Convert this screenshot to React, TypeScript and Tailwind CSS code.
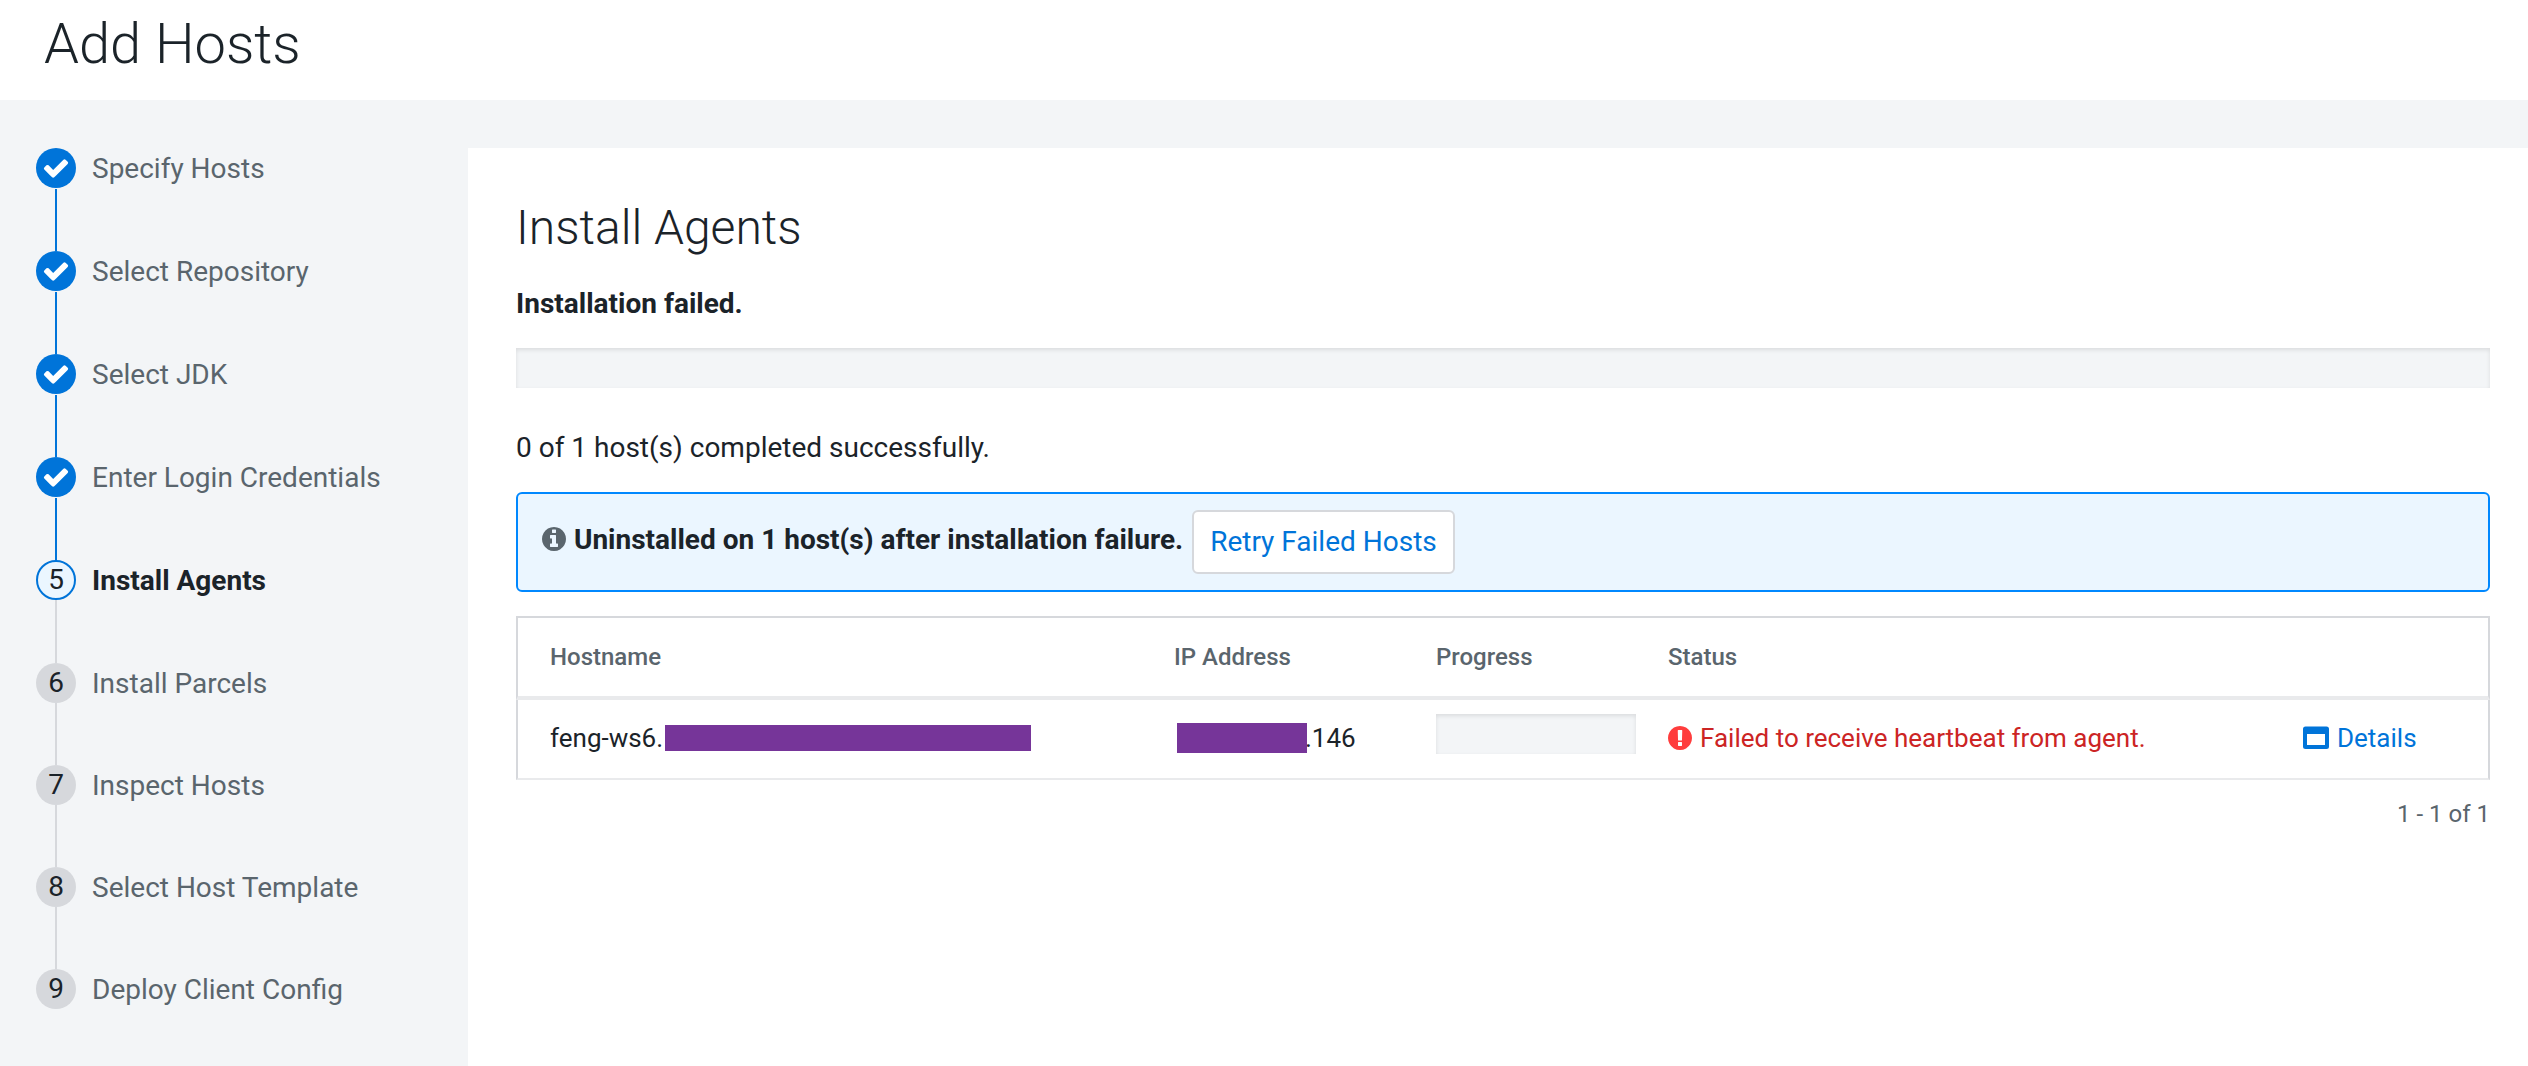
import React from "react";

type StepState = "done" | "active" | "pending";

const steps: { label: string; state: StepState }[] = [
  { label: "Specify Hosts", state: "done" },
  { label: "Select Repository", state: "done" },
  { label: "Select JDK", state: "done" },
  { label: "Enter Login Credentials", state: "done" },
  { label: "Install Agents", state: "active" },
  { label: "Install Parcels", state: "pending" },
  { label: "Inspect Hosts", state: "pending" },
  { label: "Select Host Template", state: "pending" },
  { label: "Deploy Client Config", state: "pending" },
];

const badgeStyles: Record<StepState, string> = {
  done: "bg-[#0074d9] text-white",
  active: "border-2 border-[#0074d9] bg-[#ebf6ff] text-[#1b2329]",
  pending: "bg-[#d6d8dc] text-[#1b2329]",
};

const lineStyles: Record<StepState, string> = {
  done: "mt-px h-[62px] bg-[#0074d9]",
  active: "h-[63px] bg-[#d6d8dc]",
  pending: "h-[62px] bg-[#d6d8dc]",
};

function CheckIcon() {
  return (
    <svg viewBox="0 0 1792 1792" className="size-7 fill-current" aria-hidden="true">
      <path d="M1671 566q0 40-28 68l-724 724-136 136q-28 28-68 28t-68-28l-136-136-362-362q-28-28-28-68t28-68l136-136q28-28 68-28t68 28l294 295 656-657q28-28 68-28t68 28l136 136q28 28 28 68z" />
    </svg>
  );
}

function InfoIcon() {
  return (
    <svg viewBox="128 128 1536 1536" className="mr-px inline-block size-6 fill-[#5a656d] align-[-2px]" aria-hidden="true">
      <path d="M1152 1376v-160q0-14-9-23t-23-9h-96v-512q0-14-9-23t-23-9h-320q-14 0-23 9t-9 23v160q0 14 9 23t23 9h96v320h-96q-14 0-23 9t-9 23v160q0 14 9 23t23 9h448q14 0 23-9t9-23zm-128-896v-160q0-14-9-23t-23-9h-192q-14 0-23 9t-9 23v160q0 14 9 23t23 9h192q14 0 23-9t9-23zm640 416q0 209-103 385.5t-279.5 279.5-385.5 103-385.5-103-279.5-279.5-103-385.5 103-385.5 279.5-279.5 385.5-103 385.5 103 279.5 279.5 103 385.5z" />
    </svg>
  );
}

function ErrorIcon() {
  return (
    <svg viewBox="128 128 1536 1536" className="size-6 shrink-0 fill-[#ff3d3d]" aria-hidden="true">
      <path d="M896 128q209 0 385.5 103t279.5 279.5 103 385.5-103 385.5-279.5 279.5-385.5 103-385.5-103-279.5-279.5-103-385.5 103-385.5 279.5-279.5 385.5-103zm128 1247v-190q0-14-9-23.5t-22-9.5h-192q-13 0-23 10t-10 23v190q0 13 10 23t23 10h192q13 0 22-9.5t9-23.5zm-2-344l18-621q0-12-10-18-10-8-24-8h-220q-14 0-24 8-10 6-10 18l17 621q0 10 10 17.5t24 7.5h185q14 0 23.5-7.5t10.5-17.5z" />
    </svg>
  );
}

function WindowIcon() {
  return (
    <svg viewBox="0 0 26 24" className="h-6 w-[26px] shrink-0 fill-current" aria-hidden="true">
      <path
        fillRule="evenodd"
        d="M2.5 .5h21a2.5 2.5 0 0 1 2.5 2.5v17.5a2.5 2.5 0 0 1-2.5 2.5h-21a2.5 2.5 0 0 1-2.5-2.5V3a2.5 2.5 0 0 1 2.5-2.5zM4 8v11h18V8z"
      />
    </svg>
  );
}

function ProgressBar({ label }: { label: string }) {
  return (
    <div
      role="progressbar"
      aria-label={label}
      aria-valuemin={0}
      aria-valuemax={100}
      aria-valuenow={0}
      className="h-10 bg-[#f3f5f7] shadow-[inset_0_2px_4px_rgba(0,0,0,0.1)]"
    />
  );
}

function StepList() {
  return (
    <nav aria-label="Wizard steps" className="w-[468px] shrink-0 pl-9">
      <ol>
        {steps.map(({ label, state }, i) => (
          <li key={label} className="flex gap-4" aria-current={state === "active" ? "step" : undefined}>
            <div className="flex flex-col items-center">
              <span className={`flex size-10 items-center justify-center rounded-full ${badgeStyles[state]}`}>
                {state === "done" ? <CheckIcon /> : i + 1}
              </span>
              {i < steps.length - 1 && <span className={`w-0.5 ${lineStyles[state]}`} />}
            </div>
            <span className={`pt-px ${state === "active" ? "font-bold" : "text-[#5a656d]"}`}>{label}</span>
          </li>
        ))}
      </ol>
    </nav>
  );
}

const th = "border-t-2 border-b-4 border-t-[#d6d8dc] border-b-[#e9eaec] px-4 text-left font-medium";
const td = "border-b-2 border-b-[#e9eaec] px-4";
const textCell = "pb-0.5";
const firstCell = "border-l-2 border-l-[#d6d8dc] pl-8";
const lastCell = "border-r-2 border-r-[#d6d8dc]";

function HostTable() {
  return (
    <table className="mt-6 w-full table-fixed border-separate border-spacing-0">
      <colgroup>
        <col className="w-[642px]" />
        <col className="w-[262px]" />
        <col className="w-[232px]" />
        <col />
        <col className="w-[203px]" />
      </colgroup>
      <thead className="text-2xl text-[#5a656d]">
        <tr className="h-[84px]">
          <th className={`${th} ${firstCell}`}>Hostname</th>
          <th className={th}>IP Address</th>
          <th className={th}>Progress</th>
          <th className={th}>Status</th>
          <th className={`${th} ${lastCell}`} aria-label="Actions" />
        </tr>
      </thead>
      <tbody className="text-[26px]">
        <tr className="h-20">
          <td className={`${td} ${textCell} ${firstCell}`}>
            <div className="flex items-center gap-0.5">
              feng-ws6.
              <span className="h-[26px] w-[366px] bg-[#763599]" />
            </div>
          </td>
          <td className={`${td} ${textCell}`}>
            <div className="flex items-center pl-[3px]">
              <span className="z-10 -mr-0.5 h-[30px] w-[130px] bg-[#763599]" />
              .146
            </div>
          </td>
          <td className={`${td} pt-3.5 pb-6 align-top`}>
            <ProgressBar label="feng-ws6 progress" />
          </td>
          <td className={`${td} ${textCell}`}>
            <div className="flex items-center gap-2 text-[#cc2424]">
              <ErrorIcon />
              Failed to receive heartbeat from agent.
            </div>
          </td>
          <td className={`${td} ${textCell} ${lastCell}`}>
            <a href="#details" className="flex items-center gap-2 text-[#0074d9]">
              <WindowIcon />
              Details
            </a>
          </td>
        </tr>
      </tbody>
    </table>
  );
}

export default function App() {
  return (
    <div className="flex min-h-screen flex-col bg-[#f3f5f7] font-[Roboto,sans-serif] text-[28px] leading-10 text-[#1b2329]">
      <header className="h-[100px] bg-white px-11 pt-3">
        <h1 className="text-[56px] leading-16 font-light">Add Hosts</h1>
      </header>
      <div className="flex grow pt-12">
        <StepList />
        <main className="min-w-0 grow bg-white pt-12 pr-[38px] pl-12">
          <h2 className="text-5xl leading-16 font-light">Install Agents</h2>
          <p className="mt-6 mb-6 font-bold">Installation failed.</p>
          <ProgressBar label="Installation progress" />
          <p className="mt-10 mb-6">0 of 1 host(s) completed successfully.</p>
          <div className="rounded-md border-2 border-[#0088ff] bg-[#ebf6ff] px-6 py-4">
            <InfoIcon /> <strong className="font-bold">Uninstalled on 1 host(s) after installation failure.</strong>{" "}
            <button
              type="button"
              className="ml-0.5 h-16 rounded-md border-2 border-[#d6d8dc] bg-white px-4 align-middle text-[#0074d9]"
            >
              Retry Failed Hosts
            </button>
          </div>
          <HostTable />
          <p className="mt-3.5 text-right text-2xl leading-10 text-[#5a656d]">1 - 1 of 1</p>
        </main>
      </div>
    </div>
  );
}
